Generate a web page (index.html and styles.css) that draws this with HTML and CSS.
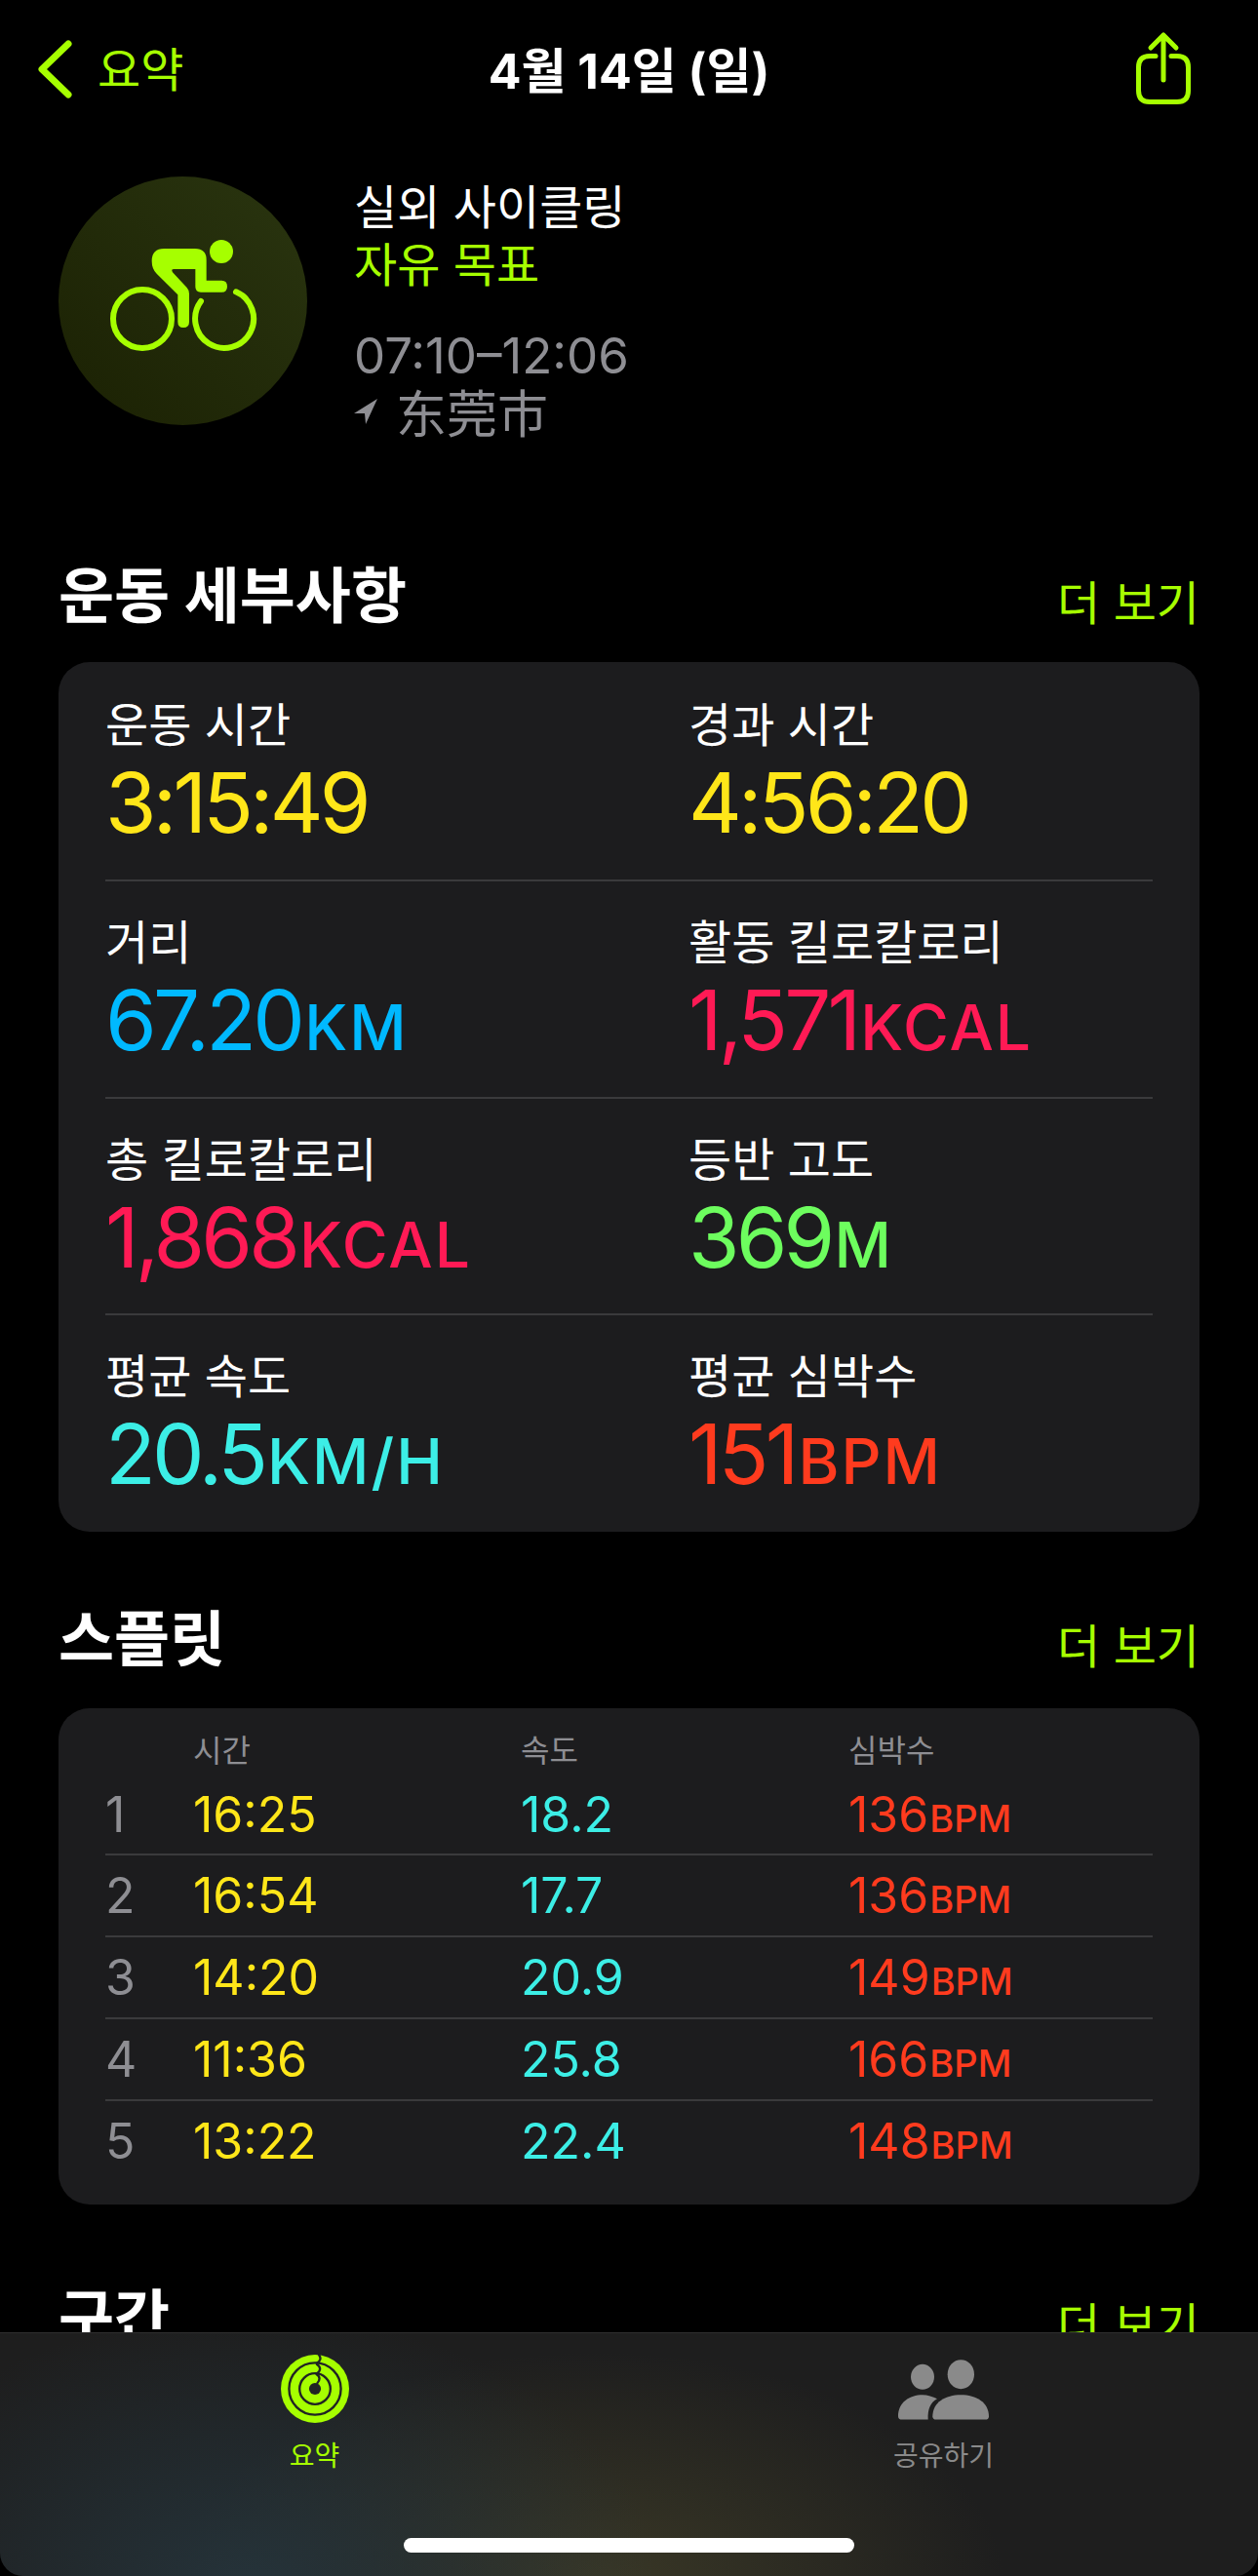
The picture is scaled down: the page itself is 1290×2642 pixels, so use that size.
FILE: index.html
```html
<!DOCTYPE html>
<html lang="ko">
<head>
<meta charset="utf-8">
<title>운동 세부사항</title>
<link rel="stylesheet" href="styles.css">
</head>
<body>
<div class="screen">
  <header class="nav">
    <div class="nav-back">
      <svg class="chevron" viewBox="0 0 36 60"><path d="M32 4 L5 30 L32 56"/></svg>
      <span>요약</span>
    </div>
    <h1 class="nav-title">4월 14일 (일)</h1>
    <svg class="share" viewBox="0 0 62 78"><path d="M23 25.5 H17 Q5.5 25.5 5.5 37 V61 Q5.5 72.5 17 72.5 H45 Q56.5 72.5 56.5 61 V37 Q56.5 25.5 45 25.5 H39"/><path d="M31 50 V4 M18 17 L31 4 L44 17"/></svg>
  </header>

  <section class="hero">
    <svg class="hero-icon" viewBox="60 63 765 765">
      <defs><linearGradient id="disc" x1="0" y1="1" x2="1" y2="0"><stop offset="0" stop-color="#1b2103"/><stop offset="1" stop-color="#2a3510"/></linearGradient></defs>
      <circle cx="442.5" cy="445.5" r="382.5" fill="url(#disc)"/>
      <circle cx="561" cy="294" r="36" fill="#a6ff00"/>
      <path fill="#a6ff00" d="M385 285 H480 Q515 285 515 320 V383 H562 Q579 383 579 401 Q579 419 562 419 H498 Q481 419 481 402 V348 H415 Q405 348 411 358 L455 405 Q462 413 462 424 V510 Q462 528 444 528 Q427 528 427 510 V427 L362 362 Q347 347 347 323 Q347 285 385 285 Z"/>
      <circle cx="318" cy="501" r="90" fill="none" stroke="#a6ff00" stroke-width="18"/>
      <path fill="none" stroke="#a6ff00" stroke-width="18" stroke-linecap="round" d="M498 447 A90 90 0 1 0 606 418"/>
    </svg>
    <div class="hero-text">
      <div class="hero-name">실외 사이클링</div>
      <div class="hero-goal">자유 목표</div>
      <div class="hero-time">07:10–12:06</div>
      <div class="hero-place">
        <svg class="pin" viewBox="0 0 24 26"><path d="M24 0 L0 15 H11 L12 26 Z"/></svg>
        <span>东莞市</span>
      </div>
    </div>
  </section>

  <section class="block block-details">
    <div class="block-head"><h2>운동 세부사항</h2><a>더 보기</a></div>
    <div class="card metrics">
      <div class="metric"><div class="metric-label">운동 시간</div><div class="metric-value yellow">3:15:49</div></div>
      <div class="metric"><div class="metric-label">경과 시간</div><div class="metric-value yellow">4:56:20</div></div>
      <div class="metric"><div class="metric-label">거리</div><div class="metric-value blue">67.20<small>KM</small></div></div>
      <div class="metric"><div class="metric-label">활동 킬로칼로리</div><div class="metric-value pink">1,571<small>KCAL</small></div></div>
      <div class="metric"><div class="metric-label">총 킬로칼로리</div><div class="metric-value pink">1,868<small>KCAL</small></div></div>
      <div class="metric"><div class="metric-label">등반 고도</div><div class="metric-value green">369<small>M</small></div></div>
      <div class="metric"><div class="metric-label">평균 속도</div><div class="metric-value cyan">20.5<small>KM/H</small></div></div>
      <div class="metric"><div class="metric-label">평균 심박수</div><div class="metric-value red">151<small>BPM</small></div></div>
    </div>
  </section>

  <section class="block block-splits">
    <div class="block-head"><h2>스플릿</h2><a>더 보기</a></div>
    <div class="card splits">
      <div class="split-head"><span></span><span>시간</span><span>속도</span><span>심박수</span></div>
      <div class="split-row"><span class="idx">1</span><span class="yellow">16:25</span><span class="cyan">18.2</span><span class="red">136<small>BPM</small></span></div>
      <div class="split-row"><span class="idx">2</span><span class="yellow">16:54</span><span class="cyan">17.7</span><span class="red">136<small>BPM</small></span></div>
      <div class="split-row"><span class="idx">3</span><span class="yellow">14:20</span><span class="cyan">20.9</span><span class="red">149<small>BPM</small></span></div>
      <div class="split-row"><span class="idx">4</span><span class="yellow">11:36</span><span class="cyan">25.8</span><span class="red">166<small>BPM</small></span></div>
      <div class="split-row"><span class="idx">5</span><span class="yellow">13:22</span><span class="cyan">22.4</span><span class="red">148<small>BPM</small></span></div>
    </div>
  </section>

  <section class="block block-segments">
    <div class="block-head"><h2>구간</h2><a>더 보기</a></div>
  </section>

  <nav class="tabbar">
    <div class="tab tab-active">
      <svg class="tab-icon" viewBox="81 103 208 208">
        <circle cx="185" cy="207" r="104" fill="#a6ff00"/>
        <g fill="none" stroke="#202324" stroke-width="7">
          <circle cx="185" cy="207" r="79"/>
          <circle cx="185" cy="207" r="47"/>
          <path stroke-linecap="round" d="M197 103 C204 113 203 122 190 129"/>
          <path stroke-linecap="round" d="M191 133 C204 141 203 153 190 161"/>
          <path stroke-linecap="round" d="M190 163 C202 170 200 182 192 190"/>
        </g>
        <circle cx="185" cy="207" r="18" fill="#202324"/>
      </svg>
      <span>요약</span>
    </div>
    <div class="tab">
      <svg class="tab-icon tab-icon-wide" viewBox="90 84 279 185">
        <g fill="#8a8a8a">
          <ellipse cx="165" cy="137" rx="36" ry="39"/>
          <ellipse cx="283" cy="129" rx="41" ry="45"/>
          <path d="M196 258 C196 215 235 192 283 192 C330 192 369 215 369 258 Q369 268 358 268 H207 Q196 268 196 258 Z"/>
          <path d="M90 258 C90 215 125 192 165 192 C180 192 197 197 210 204 C190 215 180 235 182 268 H102 Q90 268 90 258 Z"/>
        </g>
      </svg>
      <span>공유하기</span>
    </div>
    <div class="home-indicator"></div>
  </nav>
</div>
</body>
</html>
```

FILE: styles.css
```css
* { box-sizing: border-box; }
html, body { margin: 0; padding: 0; background: #000; }
body {
  width: 1290px;
  height: 2642px;
  overflow: hidden;
  font-family: Inter, "Noto Sans CJK KR", "Noto Sans", sans-serif;
  color: #fff;
}
.screen { position: relative; width: 1290px; height: 2642px; overflow: hidden; background: #000; }

.yellow { color: #ffe619; }
.blue { color: #00b9ff; }
.pink { color: #ff1a55; }
.green { color: #6dfd5e; }
.cyan { color: #3ceee6; }
.red { color: #ff3b1e; }

.nav {
  display: flex;
  align-items: center;
  justify-content: space-between;
  height: 144px;
  padding: 0 66px 0 38px;
  position: relative;
}
.nav-back { display: flex; align-items: center; gap: 26px; color: #a6ff00; font-size: 48px; line-height: 60px; }
.chevron { width: 36px; height: 60px; fill: none; stroke: #a6ff00; stroke-width: 7; stroke-linecap: round; stroke-linejoin: round; margin-top: -2px; }
.nav-title {
  position: absolute;
  left: 0;
  right: 0;
  top: 43px;
  margin: 0;
  text-align: center;
  font-size: 50px;
  line-height: 60px;
  font-weight: 700;
}
.share { width: 62px; height: 78px; fill: none; stroke: #a6ff00; stroke-width: 5; stroke-linecap: round; stroke-linejoin: round; margin-top: -2px; }

.hero { display: flex; gap: 48px; padding: 37px 0 0 60px; height: 431px; }
.hero-icon { width: 255px; height: 255px; flex: none; }
.hero-text { font-size: 48px; line-height: 62px; }
.hero-name { margin-top: 1px; }
.hero-goal { color: #a6ff00; margin-top: -3px; }
.hero-time { margin-top: 31px; color: #8e8e93; font-size: 51px; }
.hero-place { display: flex; align-items: center; gap: 19px; color: #8e8e93; font-family: "Noto Sans CJK SC", sans-serif; font-size: 52px; margin-top: -5px; }
.pin { width: 24px; height: 26px; fill: #8e8e93; }

.block { padding: 0 60px; }
.block-head { display: flex; justify-content: space-between; align-items: center; height: 74px; }
.block-head h2 { margin: 0; font-size: 62px; line-height: 74px; font-weight: 700; }
.block-head a { color: #a6ff00; font-size: 48px; padding-top: 6px; }
.card { background: #1c1c1e; border-radius: 32px; padding: 0 48px; }

.metrics { margin-top: 30px; display: grid; grid-template-columns: 598px 1fr; grid-auto-rows: 222.75px; height: 892px; }
.metric { padding-top: 35px; border-top: 2px solid #3a3a3c; }
.metric:nth-child(-n+2) { border-top: 0; padding-top: 37px; }
.metric-label { font-size: 48px; line-height: 56px; }
.metric-value { font-size: 85px; line-height: 103px; letter-spacing: -3.8px; white-space: nowrap; }
.metric-value small { font-size: 64px; font-weight: 500; letter-spacing: 2px; margin-left: 3px; }

.block-splits { margin-top: 74px; }
.splits { margin-top: 33px; height: 509px; padding-top: 26px; }
.split-head, .split-row { display: grid; grid-template-columns: 90px 336px 336px 1fr; }
.split-head { color: #8e8e93; font-size: 32px; line-height: 36px; height: 58px; }
.split-row { font-size: 50px; height: 84px; line-height: 82px; align-items: start; border-top: 2px solid #3a3a3c; }
.split-row:nth-child(2) { border-top: 0; height: 65px; line-height: 51px; }
.idx { color: #8e8e93; }
.split-row small { font-size: 38px; font-weight: 500; margin-left: 1px; }

.block-segments { margin-top: 80px; }

.tabbar {
  position: absolute;
  left: 0;
  right: 0;
  bottom: 0;
  height: 250px;
  display: grid;
  grid-template-columns: 645px 645px;
  border-top: 1px solid #2e2e2e;
  border-radius: 0 0 24px 24px;
  background:
    radial-gradient(ellipse 420px 280px at 255px 260px, #25333a 0%, rgba(37,51,58,0) 100%),
    radial-gradient(ellipse 420px 240px at 610px 260px, #3a3826 0%, rgba(58,56,38,0) 100%),
    #1e1e1e;
}
.tab { display: flex; flex-direction: column; align-items: center; padding-top: 22px; color: #8a8a8a; font-size: 28px; line-height: 34px; }
.tab-active { color: #a6ff00; }
.tab-icon { width: 70px; height: 70px; margin-bottom: 17px; }
.tab-icon-wide { width: 93px; height: 62px; margin-top: 5px; margin-bottom: 20px; }
.home-indicator {
  position: absolute;
  left: 414px;
  top: 210px;
  width: 462px;
  height: 15px;
  border-radius: 8px;
  background: #fff;
}
```
